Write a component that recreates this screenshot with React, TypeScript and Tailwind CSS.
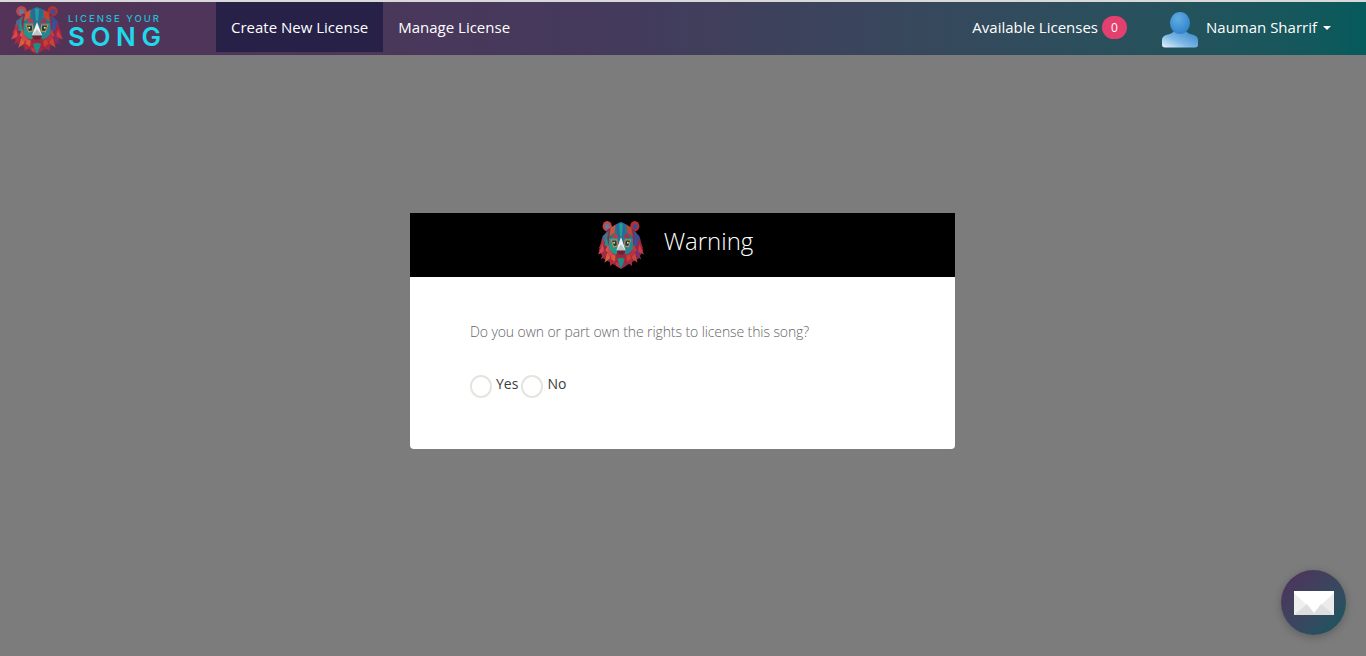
import { useState } from "react";

// polygon tiger head, drawn on a 100x100 box
const TIGER_SHAPES: [string, string][] = [
  // base so the head has no holes on the black header
  ["22,20 78,20 92,40 98,62 88,78 72,86 50,98 28,86 12,78 2,62 8,40", "#8f2a45"],
  // mane, left side
  ["24,24 10,34 8,48 18,44", "#3f6f8f"],
  ["14,36 2,58 12,54", "#b8324a"],
  ["10,50 0,70 14,64", "#d9484a"],
  ["14,58 6,80 20,70", "#a92a48"],
  ["20,66 14,86 28,76", "#d6603a"],
  ["26,74 26,92 38,84", "#b5283f"],
  ["18,30 24,56 14,52", "#2c8a86"],
  ["22,50 28,70 16,62", "#e0553f"],
  // mane, right side
  ["76,24 90,34 92,48 82,44", "#34509a"],
  ["86,36 98,58 88,54", "#a8243c"],
  ["90,50 100,70 86,64", "#c93a45"],
  ["86,58 94,80 80,70", "#7c2f70"],
  ["80,66 86,86 72,76", "#c9482f"],
  ["74,74 74,92 62,84", "#a92a48"],
  ["82,30 76,56 86,52", "#39509a"],
  ["78,50 72,70 84,62", "#c93a3a"],
  // forehead
  ["28,18 50,7 72,18 76,36 50,50 24,36", "#1e7c84"],
  ["38,12 50,7 62,12 58,32 50,44 42,32", "#2a6a98"],
  ["46,10 54,10 52,34 48,34", "#1fa096"],
  ["28,18 38,12 36,28 25,34", "#d4533f"],
  ["72,18 62,12 64,28 75,34", "#c9402f"],
  ["36,28 42,32 44,44 30,38", "#c23a4a"],
  ["64,28 58,32 56,44 70,38", "#a9304f"],
  // cheeks
  ["24,38 42,38 46,60 38,72 24,60", "#24958d"],
  ["76,38 58,38 54,60 62,72 76,60", "#258690"],
  ["22,58 36,72 30,76 20,68", "#d2454a"],
  ["78,58 64,72 70,76 80,68", "#b92f45"],
  // nose bridge
  ["50,36 60,62 40,62", "#eef2f2"],
  ["50,50 60,62 40,62", "#b9c7cc"],
  ["40,62 60,62 55,70 45,70", "#6b2233"],
  // muzzle
  ["32,70 45,70 50,76 55,70 68,70 63,84 50,90 37,84", "#a5263a"],
  ["42,78 50,76 58,78 55,88 50,98 45,88", "#1f8a86"],
  ["32,70 38,72 37,84 28,78", "#d65a3c"],
  ["68,70 62,72 63,84 72,78", "#c9402f"],
  ["38,84 45,88 48,96 40,92", "#c9383f"],
  ["62,84 55,88 52,96 60,92", "#92304f"],
];

function TigerLogo({ className }: { className?: string }) {
  return (
    <svg viewBox="0 5 100 93" preserveAspectRatio="none" className={className}>
      {/* ears */}
      <circle cx="20" cy="15" r="10" fill="#c2464f" />
      <circle cx="80" cy="15" r="10" fill="#b5302f" />
      <circle cx="20" cy="16" r="5" fill="#5a7f97" />
      <circle cx="81" cy="16" r="5" fill="#3a4f9a" />
      {TIGER_SHAPES.map(([points, fill], i) => (
        <polygon key={i} points={points} fill={fill} />
      ))}
      {/* eyes */}
      <polygon points="29,42 41,42 42,53 34,55" fill="#123f46" stroke="#d98a4f" strokeWidth="2" />
      <polygon points="71,42 59,42 58,53 66,55" fill="#123f46" stroke="#d98a4f" strokeWidth="2" />
      <circle cx="35" cy="47" r="2" fill="#e7d9b0" />
      <circle cx="65" cy="47" r="2" fill="#e7d9b0" />
    </svg>
  );
}

function UserIcon() {
  return (
    <svg viewBox="0 0 36 36" className="h-[36px] w-[36px]">
      <defs>
        <linearGradient id="userBody" x1="1" y1="0" x2="0" y2="1">
          <stop offset="0%" stopColor="#2a7fc9" />
          <stop offset="60%" stopColor="#7fb9e6" />
          <stop offset="100%" stopColor="#e8f4fc" />
        </linearGradient>
        <radialGradient id="userHead" cx="0.4" cy="0.3" r="0.8">
          <stop offset="0%" stopColor="#62ace3" />
          <stop offset="100%" stopColor="#2a7fc9" />
        </radialGradient>
      </defs>
      <path d="M0 28c0-3 2-4.500 6-5.500 4-1 6-2.500 7-5h10c1 2.500 3 4 7 5 4 1 6 2.500 6 5.500v5c0 1.500-1 2.500-3 2.500H3c-2 0-3-1-3-2.500z" fill="url(#userBody)" />
      <ellipse cx="18" cy="11" rx="10" ry="11" fill="url(#userHead)" />
    </svg>
  );
}

function Envelope() {
  return (
    <svg viewBox="0 0 40 24" className="h-[24px] w-[40px]">
      <rect width="40" height="24" fill="#ffffff" />
      <polygon points="0,24 0,2 13,14" fill="#efefef" />
      <polygon points="40,24 40,2 27,14" fill="#ebebeb" />
      <polygon points="0,24 13,13 20,22 27,13 40,24" fill="#dedede" />
    </svg>
  );
}

export default function App() {
  const [answer, setAnswer] = useState<"yes" | "no" | null>(null);

  return (
    <div className="flex h-[656px] flex-col overflow-hidden bg-[#7c7c7c] font-['Open_Sans',sans-serif]">
      {/* Navbar */}
      <div className="h-[2px] bg-[#d9d9d9]" />
      <nav className="flex h-[53px] items-center bg-gradient-to-r from-[#533358] via-[#443a5c] via-45% to-[#055a5c] pl-[11px] pr-[35px] text-white">
        <div className="flex w-[205px] items-center">
          <TigerLogo className="mt-[2px] h-[48px] w-[52px]" />
          <div className="ml-[5px] mt-[6px] flex flex-col font-['Inter',sans-serif]">
            <span className="text-[9.5px] font-medium leading-[11px] tracking-[2px] text-[#25bcd6]">LICENSE YOUR</span>
            <span className="text-[26px] font-semibold leading-[26px] tracking-[5.6px] text-[#1fd8ea]">SONG</span>
          </div>
        </div>
        <a className="flex h-[50px] items-center self-start bg-[#272047] px-[15px] text-[15px] leading-none">Create New License</a>
        <a className="flex h-[50px] items-center self-start px-[15px] text-[15px] leading-none">Manage License</a>
        <div className="ml-auto flex items-center pb-[2px]">
          <span className="text-[15px]">Available Licenses</span>
          <span className="ml-[4px] flex h-[23px] w-[25px] items-center justify-center rounded-full bg-[#e4406f] text-[12px]">0</span>
          <div className="ml-[35px] mt-[4px]">
            <UserIcon />
          </div>
          <span className="ml-[8px] text-[15px]">Nauman Sharrif</span>
          <span className="ml-[6px] h-0 w-0 border-x-[4px] border-t-[4px] border-x-transparent border-t-white" />
        </div>
      </nav>

      {/* Warning dialog */}
      <main className="flex flex-1 justify-center pt-[158px]">
        <div className="ml-[-1px] h-[236px] w-[545px] overflow-hidden rounded-b-[4px] bg-white">
          <div className="flex h-[64px] items-center justify-center bg-black pr-[14px] text-white">
            <TigerLogo className="h-[48px] w-[46px]" />
            <h2 className="ml-[20px] pb-[8px] text-[24px] font-light">Warning</h2>
          </div>
          <div className="px-[60px] pt-[45px]">
            <p className="text-[14px] font-light leading-[20px] tracking-[-0.1px] text-[#666666]">
              Do you own or part own the rights to license this song?
            </p>
            <div className="mt-[33px] flex items-start text-[14px] font-medium text-[#3d3d3d]">
              <label className="flex cursor-pointer items-start" onClick={() => setAnswer("yes")}>
                <span className={`h-[23px] w-[22px] rounded-full border-2 border-[#e6e4df] ${answer === "yes" ? "bg-[#443a5c]" : ""}`} />
                <span className="ml-[4px] leading-[17px]">Yes</span>
              </label>
              <label className="ml-[3px] flex cursor-pointer items-start" onClick={() => setAnswer("no")}>
                <span className={`h-[23px] w-[22px] rounded-full border-2 border-[#e6e4df] ${answer === "no" ? "bg-[#443a5c]" : ""}`} />
                <span className="ml-[4px] leading-[17px]">No</span>
              </label>
            </div>
          </div>
        </div>
      </main>

      {/* Contact button */}
      <button className="fixed bottom-[21px] right-[20px] flex h-[65px] w-[65px] items-center justify-center rounded-full bg-gradient-to-br from-[#4f2f5c] to-[#03585f] shadow-[0_2px_8px_rgba(0,0,0,0.25)]">
        <Envelope />
      </button>
    </div>
  );
}
